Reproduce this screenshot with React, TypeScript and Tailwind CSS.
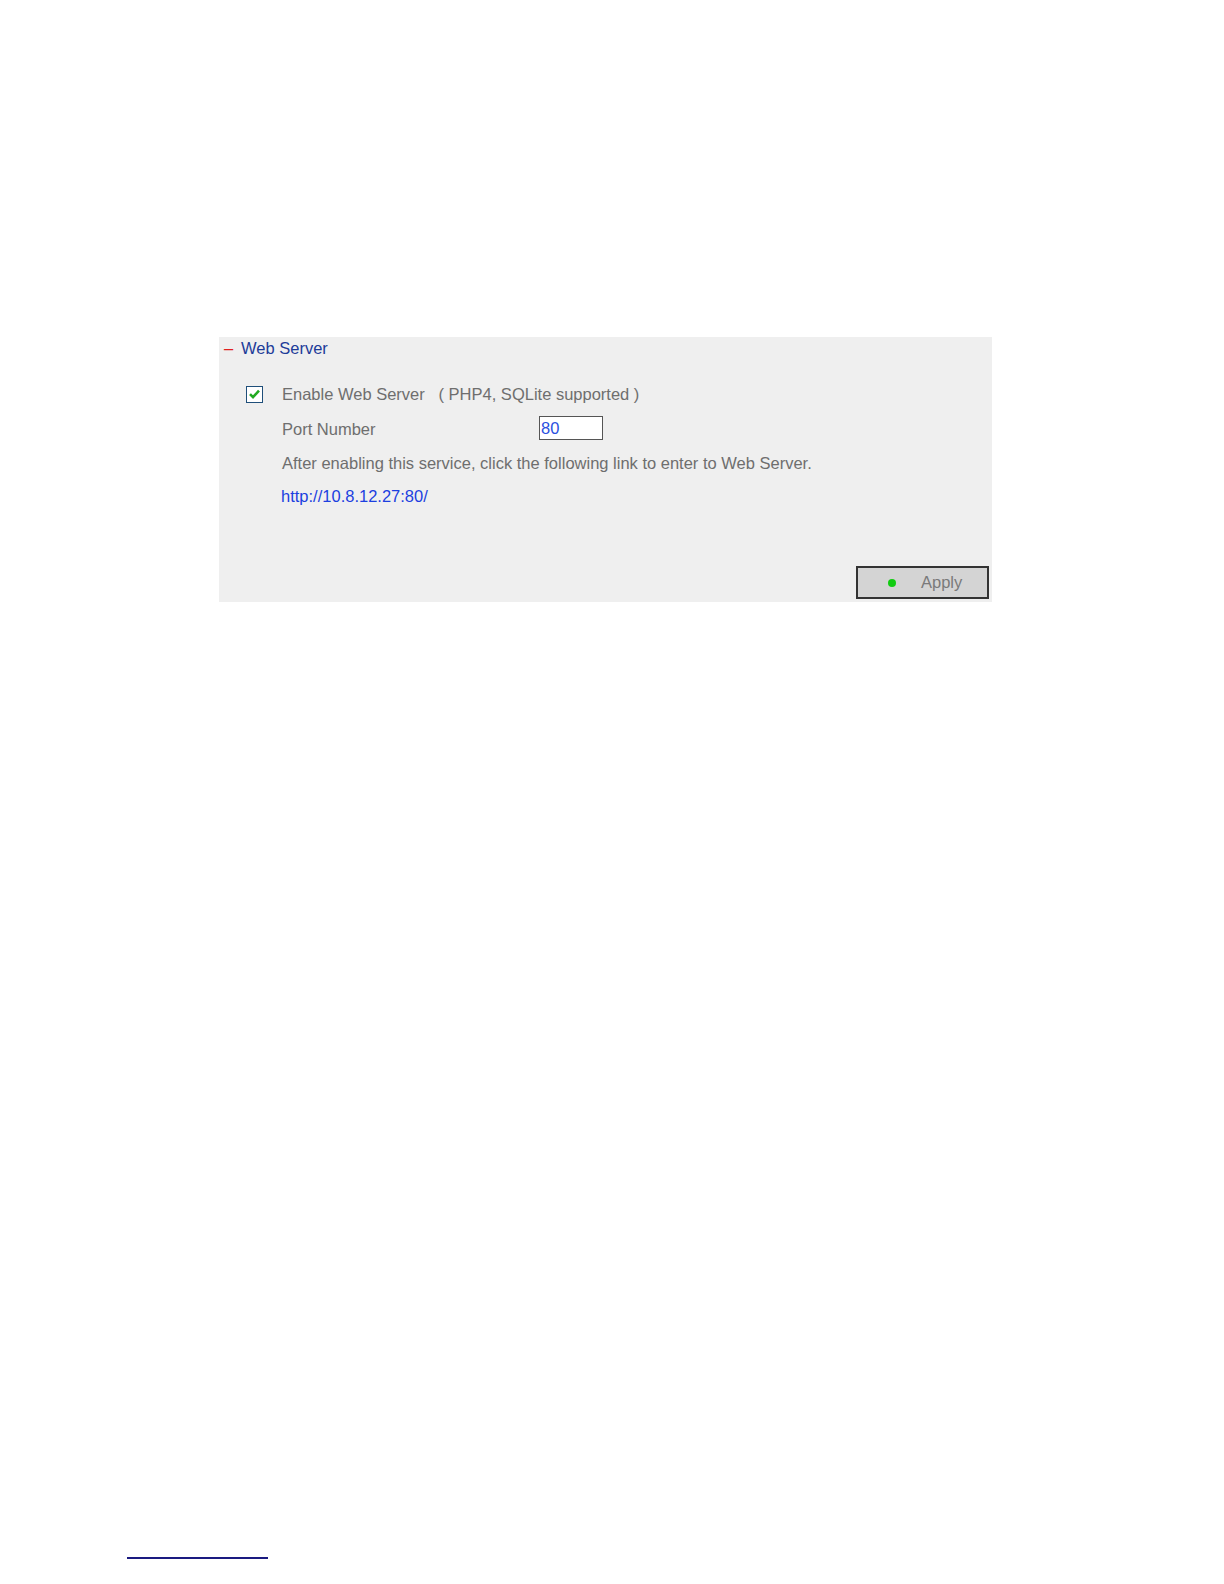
import React from "react";

const font = { fontFamily: '"Liberation Sans", Arial, sans-serif' };

export default function App() {
  return (
    <div className="w-full h-screen overflow-hidden bg-white flex flex-col" style={font}>
      <div className="mt-[337px] ml-[219px] w-[773px] h-[265px] shrink-0 bg-[#efefef] flex flex-col">
        {/* legend */}
        <div className="h-[20px] flex items-center pl-[5px] mt-[1px]">
          <span className="text-[#e02020] text-[16.5px] leading-none w-[17px]">–</span>
          <span className="text-[#1d3c99] text-[16.5px] leading-none">Web Server</span>
        </div>

        <div className="pl-[27px] mt-[26px] flex flex-col">
          <div className="h-[20px] flex items-center">
            <span className="w-[17px] h-[17px] border border-[#1f4f7a] bg-white flex items-center justify-center">
              <svg width="13" height="12" viewBox="0 0 13 12">
                <path d="M2 6.2 L5 9.2 L11 2.6" fill="none" stroke="#22aa22" strokeWidth="2.6" />
              </svg>
            </span>
            <span className="ml-[19px] text-[#6e6e6e] text-[16.5px] leading-none">
              Enable Web Server&nbsp;&nbsp;&nbsp;( PHP4, SQLite supported )
            </span>
          </div>

          <div className="h-[24px] flex items-center mt-[12px] pl-[36px]">
            <span className="w-[257px] text-[#6e6e6e] text-[16.5px] leading-none pt-[3px]">Port Number</span>
            <div className="w-[64px] h-[24px] border border-[#555] bg-white flex items-center pl-[1px]">
              <span className="text-[#2a4fe0] text-[16.5px] leading-none">80</span>
            </div>
          </div>

          <div className="h-[20px] flex items-center mt-[13px] pl-[36px]">
            <span className="text-[#6e6e6e] text-[16.5px] leading-none">
              After enabling this service, click the following link to enter to Web Server.
            </span>
          </div>

          <div className="h-[20px] flex items-center mt-[13px] pl-[35px]">
            <span className="text-[#1c3fe0] text-[16.5px] leading-none">http://10.8.12.27:80/</span>
          </div>
        </div>

        <div className="flex justify-end mt-auto pr-[3px] pb-[3px]">
          <button className="w-[133px] h-[33px] border-2 border-[#333] bg-[#d4d4d4] flex items-center">
            <span className="ml-[30px] w-[8px] h-[8px] rounded-full bg-[#11cc11]" />
            <span className="ml-[25px] text-[#7a7a7a] text-[16.5px] leading-none">Apply</span>
          </button>
        </div>
      </div>

      <div className="mt-[955px] ml-[127px] w-[141px] h-[2px] shrink-0 bg-[#1a1a80]" />
    </div>
  );
}
